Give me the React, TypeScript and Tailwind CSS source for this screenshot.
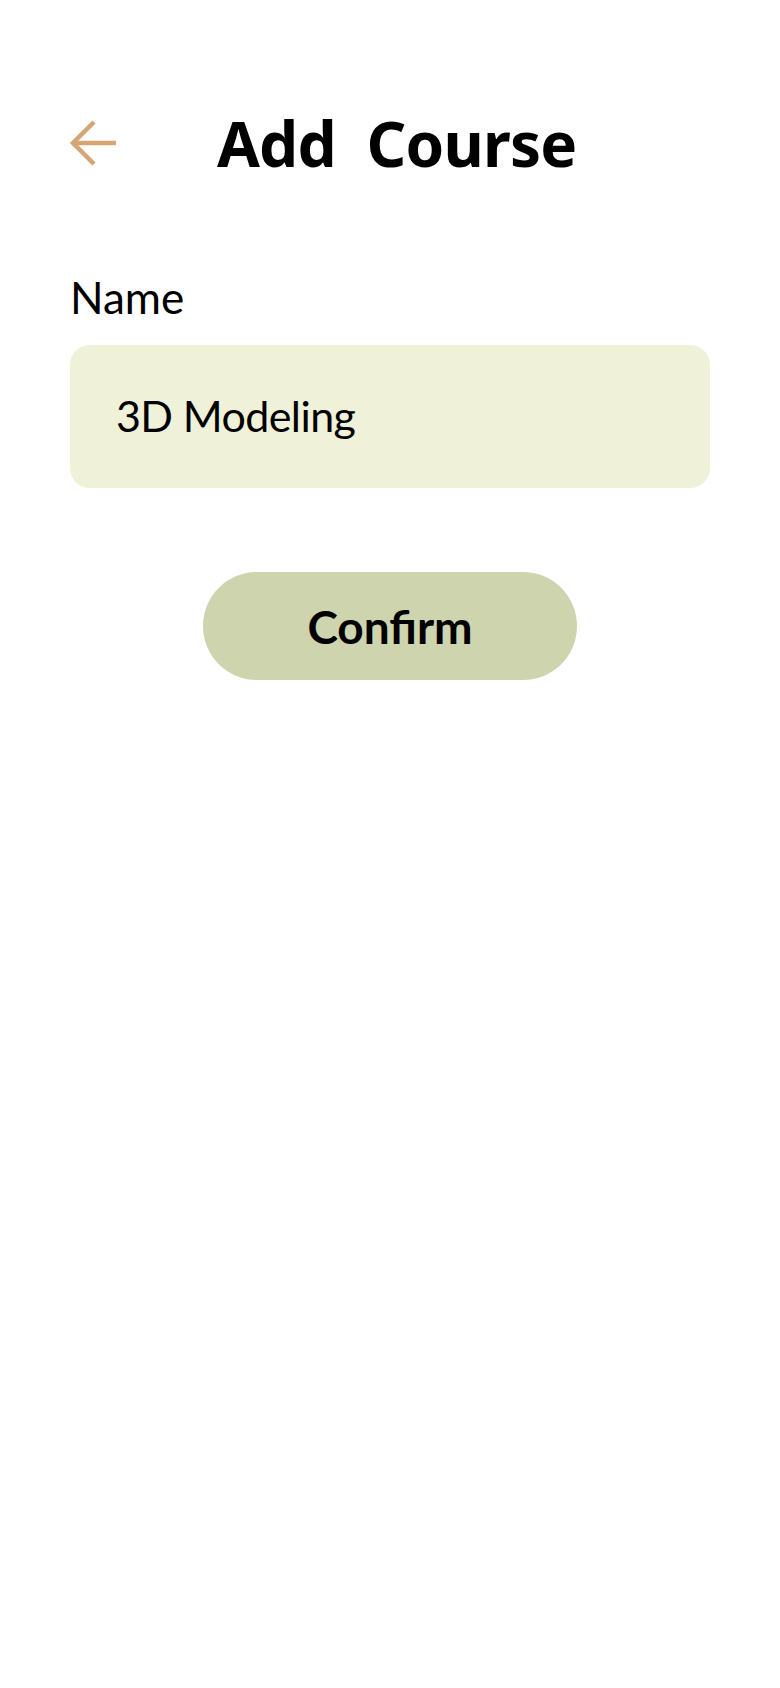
import React from "react";

export default function App() {
  return (
    <div className="w-[780px] h-[1688px] bg-white" style={{ fontFamily: "Lato, 'Noto Sans', sans-serif" }}>
      <div className="px-[70px] pt-[108px]">
        <div className="flex items-center h-[70px]">
          <button className="w-[48px] h-[48px] flex items-center justify-start text-[#D6A574]">
            <svg width="48" height="48" viewBox="0 0 48 48" fill="none" stroke="currentColor" strokeWidth="4.5" strokeLinecap="butt">
              <path d="M46 24H4" />
              <path d="M24 3L3 24l21 21" />
            </svg>
          </button>
          <h1
            className="ml-[99px] text-[62px] font-bold text-black leading-none tracking-[-0.8px]"
            style={{ fontFamily: "'Noto Sans', 'Open Sans', sans-serif" }}
          >
            Add&nbsp; Course
          </h1>
        </div>
        <div className="mt-[97px] text-[44px] text-black leading-none">Name</div>
        <div className="mt-[26px] h-[143px] rounded-[20px] bg-[#EFF1D9] flex items-center pl-[46px] text-[43px] tracking-[-0.6px] text-black">
          3D Modeling
        </div>
        <div className="mt-[84px] flex justify-center">
          <button className="w-[374px] h-[108px] rounded-full bg-[#CED5AE] text-[46px] font-bold text-black">
            Confirm
          </button>
        </div>
      </div>
    </div>
  );
}
